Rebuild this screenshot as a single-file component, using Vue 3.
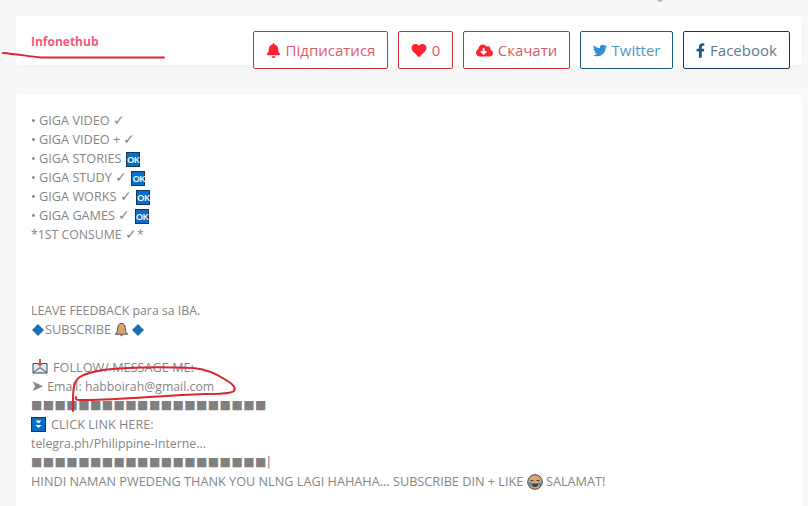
<script setup>
const buttons = [
  { label: 'Підписатися', cls: 'red', w: 135, vb: '0 0 448 512', iw: 15, d: 'M224 512c35.32 0 63.97-28.65 63.97-64H160.03c0 35.35 28.65 64 63.97 64zm215.39-149.71c-19.32-20.76-55.47-51.99-55.47-154.29 0-77.7-54.48-139.9-127.94-155.16V32c0-17.67-14.32-32-31.98-32s-31.98 14.33-31.98 32v20.84C118.56 68.1 64.08 130.3 64.08 208c0 102.3-36.15 133.53-55.47 154.29-6 6.45-8.66 14.16-8.61 21.71.11 16.4 12.98 32 32.1 32h383.8c19.12 0 32-15.6 32.1-32 .05-7.55-2.61-15.27-8.61-21.71z' },
  { label: '0', cls: 'red', w: 55, vb: '0 0 512 512', iw: 16, d: 'M462.3 62.6C407.5 15.9 326 24.3 275.7 76.2L256 96.5l-19.7-20.3C186.1 24.3 104.5 15.9 49.7 62.6c-62.8 53.6-66.1 149.8-9.9 207.9l193.5 199.8c12.5 12.9 32.8 12.9 45.3 0l193.5-199.8c56.3-58.1 53-154.3-9.8-207.9z' },
  { label: 'Скачати', cls: 'red', w: 107, vb: '0 0 640 512', iw: 17, d: 'M537.6 226.6c4.1-10.7 6.4-22.4 6.4-34.6 0-53-43-96-96-96-19.7 0-38.1 6-53.3 16.2C367 64.2 315.3 32 256 32c-88.4 0-160 71.6-160 160 0 2.7.1 5.4.2 8.1C40.2 219.8 0 273.2 0 336c0 79.5 64.5 144 144 144h368c70.7 0 128-57.3 128-128 0-61.9-44-113.6-102.4-125.4zm-132.9 88.7L299.3 420.7c-6.2 6.2-16.4 6.2-22.6 0L171.3 315.3c-10.1-10.1-2.9-27.3 11.3-27.3H248V176c0-8.8 7.2-16 16-16h48c8.8 0 16 7.2 16 16v112h65.4c14.2 0 21.4 17.2 11.3 27.3z' },
  { label: 'Twitter', cls: 'tw', w: 93, vb: '0 0 512 512', iw: 14, d: 'M459.37 151.716c.325 4.548.325 9.097.325 13.645 0 138.72-105.583 298.558-298.558 298.558-59.452 0-114.68-17.219-161.137-47.106 8.447.974 16.568 1.299 25.34 1.299 49.055 0 94.213-16.568 130.274-44.832-46.132-.975-84.792-31.188-98.112-72.772 6.498.974 12.995 1.624 19.818 1.624 9.421 0 18.843-1.3 27.614-3.573-48.081-9.747-84.143-51.98-84.143-102.985v-1.299c13.969 7.797 30.214 12.67 47.431 13.319-28.264-18.843-46.781-51.005-46.781-87.391 0-19.492 5.197-37.36 14.294-52.954 51.655 63.675 129.3 105.258 216.365 109.807-1.624-7.797-2.599-15.918-2.599-24.04 0-57.828 46.782-104.934 104.934-104.934 30.213 0 57.502 12.67 76.67 33.137 23.715-4.548 46.456-13.32 66.599-25.34-7.798 24.366-24.366 44.833-46.132 57.827 21.117-2.273 41.584-8.122 60.426-16.243-14.292 20.791-32.161 39.308-52.628 54.253z' },
  { label: 'Facebook', cls: 'fb', w: 107, vb: '0 0 320 512', iw: 9, d: 'M279.14 288l14.22-92.66h-88.91v-60.13c0-25.35 12.42-50.06 52.24-50.06h40.42V6.26S260.43 0 225.36 0c-73.22 0-121.08 44.38-121.08 124.72v70.62H22.89V288h81.39v224h100.17V288z' }
]
</script>

<template>
  <div class="page">
    <span class="speck"></span>
    <header class="head">
      <div class="brand">Infonethub</div>
      <nav class="actions">
        <a v-for="b in buttons" :key="b.label" class="btn" :class="b.cls" :style="{ width: b.w + 'px' }">
          <svg class="ico" :viewBox="b.vb" :width="b.iw" height="15"><path :d="b.d" /></svg>
          <span>{{ b.label }}</span>
        </a>
      </nav>
    </header>

    <main class="card">
      <div>• GIGA VIDEO <span class="chk">✓</span></div>
      <div>• GIGA VIDEO + <span class="chk">✓</span></div>
      <div>• GIGA STORIES <span class="ok">OK</span></div>
      <div>• GIGA STUDY <span class="chk">✓</span> <span class="ok">OK</span></div>
      <div>• GIGA WORKS <span class="chk">✓</span> <span class="ok">OK</span></div>
      <div>• GIGA GAMES <span class="chk">✓</span> <span class="ok">OK</span></div>
      <div class="lc">*1ST CONSUME <span class="chk">✓</span>*</div>
      <div class="blank"></div>
      <div class="blank"></div>
      <div class="blank"></div>
      <div class="lc">LEAVE FEEDBACK para sa IBA.</div>
      <div class="row">
        <svg class="dia" width="12" height="12" viewBox="0 0 13 13"><path d="M6.500 0 13 6.500 6.500 13 0 6.500z" fill="#1a6fb5" /></svg><span>SUBSCRIBE&nbsp;</span>
        <svg width="15" height="16" viewBox="0 0 16 16"><path d="M8 1c-3 0-4 2.500-4 5 0 3-1 5-2.500 6.500h13C13 11 12 9 12 6c0-2.500-1-5-4-5z" fill="#d9a66f" stroke="#444" stroke-width="1" /><path d="M6.500 13.500a1.600 1.600 0 0 0 3 0z" fill="#444" /></svg>
        <svg class="gap" width="12" height="12" viewBox="0 0 13 13"><path d="M6.500 0 13 6.500 6.500 13 0 6.500z" fill="#1a6fb5" /></svg>
      </div>
      <div class="blank"></div>
      <div class="row">
        <svg class="lead mail" width="16" height="16" viewBox="0 0 16 16"><path d="M1 5.500h14V15H1z" fill="#d6e9f5" stroke="#444" /><path d="M1 15 8 9.500l7 5.500" fill="none" stroke="#444" /><path d="M8 1v6" stroke="#d9533f" stroke-width="2" /><path d="M5.500 5.500 8 9l2.500-3.500z" fill="#d9533f" /></svg>
        <span>FOLLOW/ MESSAGE ME:</span>
      </div>
      <div class="lc"><span class="arrow">➤</span> Email: habboirah@gmail.com</div>
      <div class="bars">■■■■■■■■■■■■■■■■■■■■</div>
      <div class="row">
        <svg class="lead" width="15" height="15" viewBox="0 0 15 15"><rect x=".5" y=".5" width="14" height="14" fill="#0a6cc0" stroke="#12375a" /><path d="M4.500 3.500h6L7.500 6.500zM4.500 8h6l-3 3z" fill="#fff" /></svg>
        <span>CLICK LINK HERE:</span>
      </div>
      <div class="lc">telegra.ph/Philippine-Interne...</div>
      <div class="bars">■■■■■■■■■■■■■■■■■■■■<span class="tick">|</span></div>
      <div class="row">
        <span>HINDI NAMAN PWEDENG THANK YOU NLNG LAGI HAHAHA... SUBSCRIBE DIN + LIKE&nbsp;</span>
        <svg width="16" height="16" viewBox="0 0 16 16"><circle cx="8" cy="8" r="7.300" fill="#d9a66f" stroke="#444" /><path d="M3.500 6.500h3M9.500 6.500h3" stroke="#444" stroke-width="1.200" /><path d="M4.500 9.500h7a3.500 3.500 0 0 1-7 0z" fill="#444" /><path d="M1.500 8.500h3v3h-3zM11.500 8.500h3v3h-3z" fill="#3d8fd9" /></svg>
        <span>&nbsp;SALAMAT!</span>
      </div>
    </main>

    <svg class="ink" width="808" height="506" viewBox="0 0 808 506" fill="none" stroke="#dc2430" stroke-linecap="round" stroke-linejoin="round">
      <path d="M3 53c12 1 24 3 38 4.500h123" stroke-width="1.900" />
      <path d="M73 411c0-9-.5-17 1-25 2-8 6-12 29-16 25-3 60-3 90-2 12 1 24 6 33 12 8 5 10 8 8 11-4 3-16 3-30 3-40 1-92 7-124 6-4 0-5-1-4-3" stroke-width="2" />
    </svg>
  </div>
</template>

<style>
html, body { margin: 0; background: #f8f8f9; }
</style>

<style scoped>
.page {
  position: relative;
  width: 808px;
  height: 506px;
  overflow: hidden;
  box-sizing: border-box;
  padding: 16px 6px 0 16px;
  background: #f8f8f9;
  font-family: "Open Sans", sans-serif;
}
.speck {
  position: absolute;
  left: 657px;
  top: -4px;
  width: 6px;
  height: 6px;
  border-radius: 50%;
  background: #bbb;
}
.head {
  display: flex;
  justify-content: space-between;
  align-items: flex-start;
  height: 49px;
  background: #fff;
  border-radius: 3px;
  box-sizing: border-box;
  padding: 16px 12px 0 15px;
  box-shadow: 0 2px 6px rgba(0, 0, 0, 0.02);
}
.brand {
  font-size: 12px;
  line-height: 20px;
  font-weight: 700;
  color: #f25a76;
}
.actions {
  display: flex;
  gap: 10px;
  margin-top: -1px;
}
.btn {
  display: flex;
  align-items: center;
  justify-content: center;
  gap: 5px;
  height: 38px;
  box-sizing: border-box;
  border: 1px solid;
  border-radius: 2px;
  background: #fff;
  font-size: 15px;
}
.ico path { fill: currentColor; }
.red { border-color: #cf2f3a; color: #de5a64; }
.red .ico { color: #ff2233; }
.tw { border-color: #1c5d8c; color: #4d99c9; }
.tw .ico { color: #2f8fd0; }
.fb { border-color: #1b3552; color: #5d7a92; }
.fb .ico { color: #1f5a8a; }
.card {
  margin-top: 30px;
  height: 420px;
  padding: 16px 15px 0;
  background: #fff;
  border-radius: 3px;
  font-size: 12.7px;
  line-height: 19px;
  color: #858585;
}
.blank { height: 19px; }
.lc { font-size: 12.3px; }
.row {
  display: flex;
  align-items: center;
  height: 19px;
}
.chk { font-size: 14px; line-height: 1; font-weight: 300; }
.dia { margin-left: 1px; margin-right: 1px; }
.gap { margin-left: 3px; }
.lead { margin-right: 5px; }
.mail { margin-top: -3px; margin-right: 5px; margin-left: 1px; }
.ok {
  display: inline-block;
  width: 14px;
  height: 15px;
  line-height: 13px;
  margin-left: 1px;
  background: #0a6fc4;
  border: 1px solid #12375a;
  box-sizing: border-box;
  color: #fff;
  font-size: 9.5px;
  font-weight: 600;
  text-align: center;
  vertical-align: 0;
  letter-spacing: -0.7px;
}
.arrow { font-size: 15px; line-height: 1; }
.bars {
  font-family: "DejaVu Sans", sans-serif;
  font-size: 12px;
  letter-spacing: 0.45px;
  color: #808080;
}
.tick { letter-spacing: 0; font-size: 12px; }
.ink {
  position: absolute;
  left: 0;
  top: 0;
  pointer-events: none;
}
</style>
